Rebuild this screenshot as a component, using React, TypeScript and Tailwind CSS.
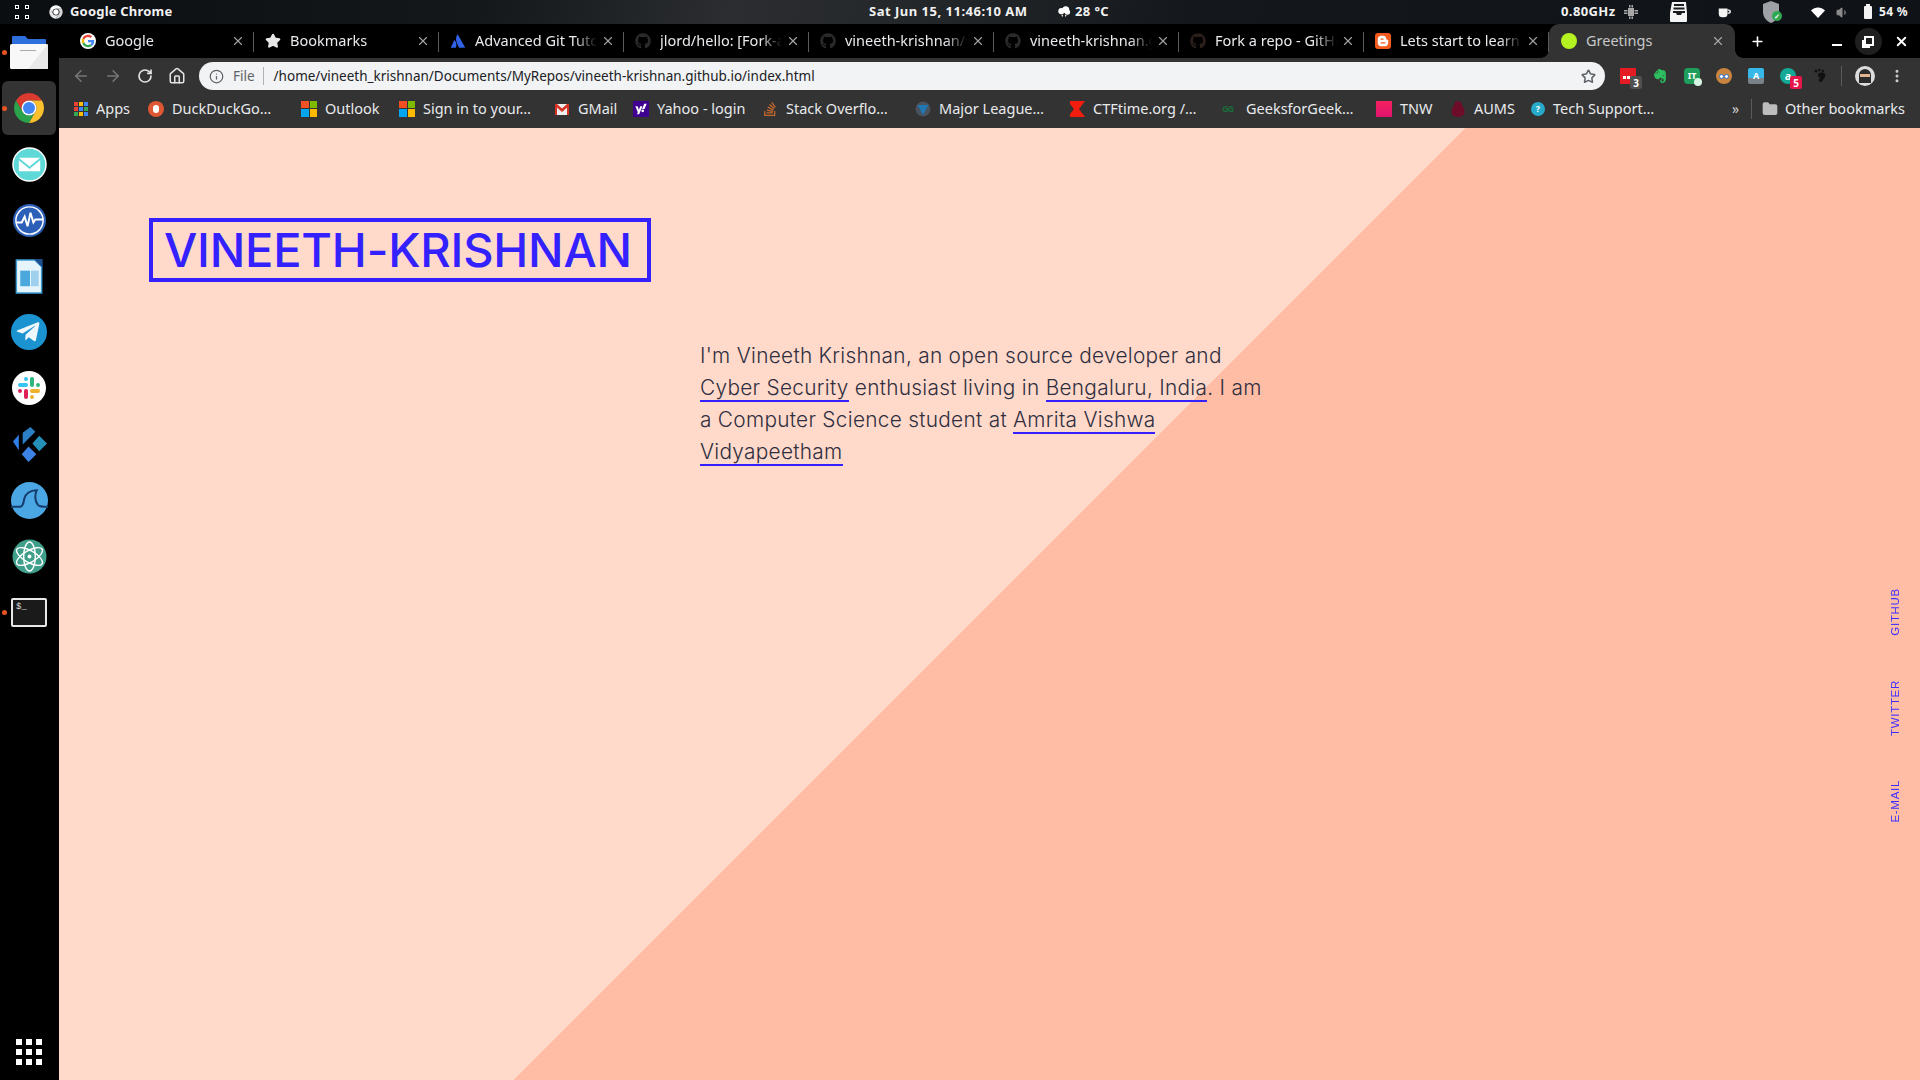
import type { ReactNode } from 'react';
import { ArrowLeft, ArrowRight, RotateCw, Home, Info, Star, X, Plus, Folder, Volume1, MoreVertical } from 'lucide-react';
import { FaGithub, FaTelegramPlane, FaEvernote, FaStackOverflow, FaYahoo, FaBloggerB } from 'react-icons/fa';

const ui = '[font-family:"Noto_Sans",sans-serif]';

const ChromeLogo = ({ className, mono }: { className?: string; mono?: boolean }) => (
  <svg viewBox="0 0 48 48" className={className}>
    <path fill={mono ? '#fff' : '#db3a2e'} d="M6.68 14A20 20 0 0 1 41.32 14H24A10 10 0 0 0 15.34 29Z" />
    <path fill={mono ? '#e8e8e8' : '#2ba24c'} d="M6.68 14 15.34 29A10 10 0 0 0 32.66 29L24 44A20 20 0 0 1 6.68 14Z" />
    <path fill={mono ? '#d5d5d5' : '#fbc02d'} d="M41.32 14H24A10 10 0 0 1 32.66 29L24 44A20 20 0 0 0 41.32 14Z" />
    <circle cx="24" cy="24" r="10" fill={mono ? '#14181c' : '#fff'} />
    <circle cx="24" cy="24" r="8" fill={mono ? '#fff' : '#4285f4'} />
  </svg>
);

const GoogleG = () => (
  <svg viewBox="0 0 48 48" className="w-4 h-4 rounded-full bg-white">
    <path fill="#ea4335" d="M24 12c3 0 5.4 1 7.4 2.800l5-5C33.200 6.800 29 5 24 5 16.600 5 10.200 9.200 7.200 15.400l5.800 4.500C14.500 15.300 18.900 12 24 12z" />
    <path fill="#4285f4" d="M42.600 24.500c0-1.400-.1-2.600-.4-3.800H24v7.200h10.500c-.5 2.500-1.900 4.600-4 6l5.600 4.400c3.400-3.100 6.500-7.700 6.500-13.800z" />
    <path fill="#fbbc05" d="M13 28.100c-.4-1.300-.7-2.700-.7-4.100s.3-2.800.7-4.100l-5.800-4.500C6 18 5 20.900 5 24s1 6 2.200 8.600z" />
    <path fill="#34a853" d="M24 43c5 0 9.200-1.700 12.100-4.500l-5.600-4.400c-1.600 1.100-3.700 1.900-6.500 1.900-5.100 0-9.500-3.300-11-7.900l-5.800 4.500C10.200 38.800 16.600 43 24 43z" />
  </svg>
);

const AtlassianIcon = () => (
  <svg viewBox="0 0 24 24" className="w-4 h-4">
    <path fill="#2f62e8" d="M7.200 11.300c-.3-.4-.8-.3-1 .1L1 22h7.300c.3 0 .5-.2.600-.4 1.600-3.300.6-8.300-1.700-10.300z" />
    <path fill="#2f62e8" d="M11 2.400c-2.700 4.300-2.500 9 .1 14.300l2.300 4.900c.1.200.3.400.6.400H22c.4 0 .6-.4.500-.7L11.800 2.400c-.2-.4-.6-.4-.8 0z" />
  </svg>
);

const Windows = () => (
  <span className="grid grid-cols-2 gap-px w-4 h-4 shrink-0">
    <span className="bg-[#f25022]" />
    <span className="bg-[#7fba00]" />
    <span className="bg-[#00a4ef]" />
    <span className="bg-[#ffb900]" />
  </span>
);

const AppsGrid = () => (
  <span className="grid grid-cols-3 gap-px w-[14px] h-[14px] shrink-0">
    {['bg-[#ea4335]', 'bg-[#fbbc05]', 'bg-[#4285f4]', 'bg-[#ea4335]', 'bg-[#4285f4]', 'bg-[#34a853]', 'bg-[#34a853]', 'bg-[#fbbc05]', 'bg-[#4285f4]'].map((c, i) => (
      <span key={i} className={c} />
    ))}
  </span>
);

const tabs: { title: string; icon: ReactNode }[] = [
  { title: 'Google', icon: <GoogleG /> },
  { title: 'Bookmarks', icon: <Star className="w-4 h-4 text-[#e8e8e8]" fill="#e8e8e8" /> },
  { title: 'Advanced Git Tutorials', icon: <AtlassianIcon /> },
  { title: 'jlord/hello: [Fork-a-Repo]', icon: <FaGithub className="w-4 h-4 text-[#2a2a2a]" /> },
  { title: 'vineeth-krishnan/vineeth', icon: <FaGithub className="w-4 h-4 text-[#2a2a2a]" /> },
  { title: 'vineeth-krishnan.github.io', icon: <FaGithub className="w-4 h-4 text-[#2a2a2a]" /> },
  { title: 'Fork a repo - GitHub Help', icon: <FaGithub className="w-4 h-4 text-[#2b1f1c]" /> },
  {
    title: 'Lets start to learn Git',
    icon: (
      <span className="flex items-center justify-center w-4 h-4 rounded-[3px] bg-[#f4591e]">
        <FaBloggerB className="w-3 h-3 text-white" />
      </span>
    ),
  },
];

const bookmarks: { title: string; width: string; icon: ReactNode }[] = [
  { title: 'Apps', width: 'w-[74px]', icon: <AppsGrid /> },
  {
    title: 'DuckDuckGo…',
    width: 'w-[153px]',
    icon: (
      <span className="flex items-center justify-center w-4 h-4 rounded-full bg-[#de5833] shrink-0">
        <span className="w-[6px] h-[8px] rounded-full bg-white" />
      </span>
    ),
  },
  { title: 'Outlook', width: 'w-[98px]', icon: <Windows /> },
  { title: 'Sign in to your…', width: 'w-[155px]', icon: <Windows /> },
  {
    title: 'GMail',
    width: 'w-[79px]',
    icon: (
      <svg viewBox="0 0 16 16" className="w-4 h-4 shrink-0">
        <rect x="1" y="3" width="14" height="11" fill="#eee" />
        <path fill="#d93025" d="M1 3h2l5 4.500L13 3h2v11h-2V6.500L8 11 3 6.500V14H1z" />
      </svg>
    ),
  },
  {
    title: 'Yahoo - login',
    width: 'w-[129px]',
    icon: (
      <span className="flex items-center justify-center w-4 h-4 bg-[#400090] shrink-0">
        <FaYahoo className="w-3 h-3 text-white" />
      </span>
    ),
  },
  { title: 'Stack Overflo…', width: 'w-[153px]', icon: <FaStackOverflow className="w-4 h-4 text-[#c8682c] shrink-0" /> },
  {
    title: 'Major League…',
    width: 'w-[154px]',
    icon: (
      <svg viewBox="0 0 16 16" className="w-4 h-4 shrink-0">
        <circle cx="8" cy="8" r="7.500" fill="#49525e" />
        <path fill="#1f78b4" d="M2.500 4h11L8 14z" />
      </svg>
    ),
  },
  {
    title: 'CTFtime.org /…',
    width: 'w-[153px]',
    icon: (
      <svg viewBox="0 0 16 16" className="w-4 h-4 shrink-0">
        <path fill="#f21d0f" d="M1 0h15L10 8l6 8H1l0-3 4-5-4-5z" />
      </svg>
    ),
  },
  {
    title: 'GeeksforGeek…',
    width: 'w-[154px]',
    icon: <span className="w-4 text-[9px] font-bold text-[#1b6b3a] shrink-0 tracking-[-1px]">GG</span>,
  },
  {
    title: 'TNW',
    width: 'w-[74px]',
    icon: <span className="w-4 h-4 bg-[linear-gradient(180deg,#f5215f,#e0146e)] shrink-0" />,
  },
  {
    title: 'AUMS',
    width: 'w-[81px]',
    icon: (
      <svg viewBox="0 0 16 16" className="w-4 h-4 shrink-0">
        <path fill="#6d0d2a" d="M8 0c2.500 0 4 2 4 4.500 1.500 1.500 2.500 4 2.500 7 0 2-2 4.500-6.500 4.500S1.500 13.500 1.500 11.500c0-3 1-5.500 2.500-7C4 2 5.500 0 8 0z" />
      </svg>
    ),
  },
  {
    title: 'Tech Support…',
    width: 'w-[201px]',
    icon: (
      <span className="flex items-center justify-center w-[14px] h-[14px] rounded-full bg-[#27a9c9] text-[9px] font-bold text-white shrink-0">?</span>
    ),
  },
];

const Tab = ({ title, icon }: { title: string; icon: ReactNode }) => (
  <div className="relative flex items-center h-[34px] w-[185px] shrink-0 pl-[11px]">
    <span className="flex items-center justify-center w-4 h-4 shrink-0">{icon}</span>
    <span className="ml-[9px] w-[122px] overflow-hidden whitespace-nowrap text-[14.500px] text-[#e8eaed] [mask-image:linear-gradient(90deg,#000_82%,transparent)]">
      {title}
    </span>
    <X className="absolute left-[162px] top-[10px] w-[14px] h-[14px] text-[#a0a0a0]" />
    <span className="absolute right-0 top-[8px] h-[20px] w-px bg-[#5b5b5b]" />
  </div>
);

const ExtBadge = ({ className, text }: { className: string; text: string }) => (
  <span className={`absolute -right-[6px] -bottom-[5px] flex items-center justify-center w-[12px] h-[13px] rounded-[2px] text-[10px] font-bold leading-none text-white ${className}`}>
    {text}
  </span>
);

const TopBar = () => (
  <header className={`flex items-center h-6 shrink-0 text-[13px] font-bold text-[#f2f2f2] bg-[linear-gradient(100deg,#0b0e11_0%,#14181b_25%,#2b2d30_38%,#24272a_48%,#14181c_62%,#0f1317_100%)] ${ui}`}>
    <span className="grid grid-cols-2 gap-x-[6px] gap-y-[6px] ml-[15px] w-[14px]">
      <span className="w-1 h-1 border border-white" />
      <span className="w-1 h-1 border border-white" />
      <span className="w-1 h-1 border border-white" />
      <span className="w-1 h-1 border border-white" />
    </span>
    <ChromeLogo mono className="w-4 h-4 ml-[19px]" />
    <span className="ml-[6px] w-[799px] whitespace-nowrap tracking-[0.2px]">Google Chrome</span>
    <span className="w-[188px] whitespace-nowrap tracking-[0.5px]">Sat Jun 15, 11:46:10 AM</span>
    <svg viewBox="0 0 16 16" className="w-[14px] h-[14px] fill-white">
      <circle cx="5" cy="7" r="3.500" />
      <circle cx="10" cy="5.500" r="4" />
      <circle cx="12" cy="8" r="3" />
      <path d="M5 11h2l-1 3zM9 11h2l-1 3z" />
    </svg>
    <span className="ml-[4px] w-[486px] whitespace-nowrap tracking-[0.4px]">28 °C</span>
    <span className="w-[63px] whitespace-nowrap tracking-[0.4px]">0.80GHz</span>
    <svg viewBox="0 0 14 14" className="w-[14px] h-[14px] fill-[#a8a8a8]">
      <path d="M4 3h6v8H4zM5 0h1.500v2.500H5zM7.500 0H9v2.500H7.500zM5 11.500h1.500V14H5zM7.500 11.500H9V14H7.500zM0 5h3.500v1.500H0zM0 7.500h3.500V9H0zM10.500 5H14v1.500h-3.500zM10.500 7.500H14V9h-3.500z" />
    </svg>
    <svg viewBox="0 0 22 22" className="w-[22px] h-[22px] ml-[30px]">
      <path fill="#f4f4f4" d="M4 1h14l1 11v8a1 1 0 0 1-1 1H3a1 1 0 0 1-1-1v-8z" />
      <path fill="#1a1d20" d="M6 3h10v2H6zM5.500 6.500h11v2h-11zM5 10h12v2h-3l-1 2H9l-1-2H5z" />
    </svg>
    <svg viewBox="0 0 16 16" className="w-[14px] h-[14px] ml-[27px] fill-[#f4f4f4]">
      <path d="M2 4h10v6a4 4 0 0 1-4 4H6a4 4 0 0 1-4-4z" />
      <path d="M12 5h1.500a2 2 0 0 1 0 5H12V8.500h1.200a.7.7 0 0 0 0-2H12z" />
    </svg>
    <span className="relative ml-[31px] w-[18px] h-[22px]">
      <svg viewBox="0 0 18 22" className="w-[18px] h-[22px]">
        <path fill="#9ea2a6" d="M9 0l8 3v8c0 5-3.500 9-8 11-4.500-2-8-6-8-11V3z" />
      </svg>
      <span className="absolute right-[-2px] bottom-[2px] flex items-center justify-center w-[10px] h-[10px] rounded-full bg-[#2fa84f] text-[7px] leading-none text-white">✓</span>
    </span>
    <svg viewBox="0 0 14 11" className="w-[14px] h-[11px] ml-[31px] fill-white">
      <path d="M0 3.500C2 1.500 4.500.5 7 .5s5 1 7 3L7 11z" />
    </svg>
    <Volume1 className="w-[13px] h-[13px] ml-[11px] text-[#8c8c8c]" fill="#8c8c8c" />
    <span className="relative ml-[15px] w-[8px] h-[13px] bg-[#f2f2f2] rounded-[1px]">
      <span className="absolute left-[2px] -top-[2px] w-[4px] h-[2px] bg-[#f2f2f2]" />
    </span>
    <span className="ml-[7px] whitespace-nowrap text-[12px] tracking-[0.3px]">54 %</span>
  </header>
);

const TabStrip = () => (
  <div className="flex items-center h-[34px] shrink-0 bg-black pl-[10px]">
    {tabs.map((t) => (
      <Tab key={t.title} title={t.title} icon={t.icon} />
    ))}
    <div className="relative flex items-center h-[34px] w-[186px] shrink-0 pl-[12px] rounded-t-[10px] bg-[#333333]">
      <span className="absolute -left-2 bottom-0 w-2 h-2 bg-[radial-gradient(circle_at_0_0,transparent_7.500px,#333333_8px)]" />
      <span className="absolute -right-2 bottom-0 w-2 h-2 bg-[radial-gradient(circle_at_100%_0,transparent_7.500px,#333333_8px)]" />
      <span className="w-4 h-4 rounded-full bg-[#b5f221] shrink-0" />
      <span className="ml-[9px] text-[14.500px] text-[#c6c8ca]">Greetings</span>
      <X className="absolute left-[162px] top-[10px] w-[14px] h-[14px] text-[#a8a8a8]" />
    </div>
    <Plus className="w-[15px] h-[15px] ml-[15px] text-white" strokeWidth={2.5} />
    <span className="ml-[67px] w-[10px] h-[2px] mt-[8px] bg-white" />
    <span className="flex items-center justify-center w-[27px] h-[27px] ml-[13px] rounded-full bg-[#1f1f1f]">
      <span className="relative w-[10px] h-[10px] border-2 border-white">
        <span className="absolute -left-[4px] top-[2px] w-[8px] h-[8px] border-l-2 border-b-2 border-white" />
      </span>
    </span>
    <X className="w-[15px] h-[15px] ml-[12px] text-white" strokeWidth={3} />
  </div>
);

const Toolbar = () => (
  <div className="flex items-center h-[34px] shrink-0 bg-[#333333] pt-[2px]">
    <ArrowLeft className="w-[18px] h-[18px] ml-[13px] text-[#777]" />
    <ArrowRight className="w-[18px] h-[18px] ml-[14px] text-[#777]" />
    <RotateCw className="w-[16px] h-[16px] ml-[15px] text-[#e3e3e3]" strokeWidth={2.5} />
    <Home className="w-[18px] h-[18px] ml-[15px] text-[#e3e3e3]" />
    <div className="flex items-center w-[1406px] h-[28px] ml-[13px] rounded-full bg-[#f1f3f4]">
      <Info className="w-[15px] h-[15px] ml-[10px] text-[#5f6368]" />
      <span className="ml-[9px] text-[13.500px] text-[#5f6368]">File</span>
      <span className="ml-[8px] w-px h-[18px] bg-[#b0b3b6]" />
      <span className="ml-[10px] text-[13.500px] text-[#202124] whitespace-nowrap">/home/vineeth_krishnan/Documents/MyRepos/vineeth-krishnan.github.io/index.html</span>
      <Star className="w-[15px] h-[15px] ml-auto mr-[9px] text-[#5f6368]" strokeWidth={2.5} />
    </div>
    <span className="relative flex items-end justify-center w-4 h-4 ml-[15px] bg-[#e51c23] rounded-[1px] pb-[5px] gap-px">
      <span className="w-[3px] h-[3px] bg-white" />
      <span className="w-[3px] h-[3px] bg-white" />
      <span className="w-[3px] h-[3px] bg-white" />
      <ExtBadge className="bg-[#505050]" text="3" />
    </span>
    <FaEvernote className="w-4 h-4 ml-[16px] text-[#2dbe60]" />
    <span className="relative flex items-center justify-center w-4 h-4 ml-[16px] rounded-[4px] bg-[#1e9e5a] text-[9px] font-bold text-white">
      IT
      <span className="absolute -right-[2px] -bottom-[2px] w-[8px] h-[8px] rounded-full bg-[#d7f5e3]" />
    </span>
    <span className="relative flex items-center justify-center w-4 h-4 ml-[16px] rounded-full bg-[#c9853e]">
      <span className="w-[5px] h-[5px] rounded-full border border-[#2d6fd0] bg-white" />
      <span className="w-[5px] h-[5px] rounded-full border border-[#2d6fd0] bg-white" />
    </span>
    <span className="flex items-center justify-center w-4 h-4 ml-[16px] rounded-[2px] bg-[linear-gradient(180deg,#36b9e8_60%,#7a8288_60%)] text-[9px] font-bold text-white">A</span>
    <span className="relative flex items-center justify-center w-4 h-4 ml-[16px] rounded-full bg-[#14a896] text-[11px] font-bold text-white">
      a
      <ExtBadge className="bg-[#e8174b]" text="5" />
    </span>
    <svg viewBox="0 0 16 16" className="w-4 h-4 ml-[16px] fill-[#111]">
      <path d="M6 6c2-2 6-2 7 0 1 3-1 4-2 6-1 2-3 3-4 1s1-2 1-3-3-1-2-4z" />
      <circle cx="4" cy="3" r="1.500" />
      <circle cx="7.500" cy="2" r="1.300" />
      <circle cx="11" cy="3" r="1.200" />
    </svg>
    <span className="w-px h-[20px] ml-[13px] bg-[#5b5b5b]" />
    <span className="relative flex justify-center w-[20px] h-[20px] ml-[13px] rounded-full bg-[#dcdcdc] overflow-hidden">
      <span className="absolute top-[3px] w-[12px] h-[14px] rounded-t-[6px] bg-[#2b2b2b]" />
      <span className="absolute top-[8px] w-[10px] h-[3px] bg-[#e2b38f]" />
    </span>
    <MoreVertical className="w-4 h-4 ml-[14px] text-[#d0d0d0]" strokeWidth={2.5} />
  </div>
);

const BookmarksBar = () => (
  <div className="flex items-center h-[36px] shrink-0 bg-[#333333] pl-[15px] pb-[3px] text-[14.500px] text-[#e8eaed]">
    {bookmarks.map((b) => (
      <div key={b.title} className={`flex items-center gap-[8px] shrink-0 whitespace-nowrap ${b.width}`}>
        {b.icon}
        <span>{b.title}</span>
      </div>
    ))}
    <span className="w-[10px] text-[14px] text-[#d0d0d0]">»</span>
    <span className="w-px h-[20px] ml-[9px] bg-[#5b5b5b]" />
    <Folder className="w-4 h-4 ml-[10px] text-[#bdbdbd]" fill="#bdbdbd" />
    <span className="ml-[7px] whitespace-nowrap">Other bookmarks</span>
  </div>
);

const DockSlot = ({ children, active, running }: { children: ReactNode; active?: boolean; running?: boolean }) => (
  <div className="relative flex items-center justify-center w-full h-14 shrink-0 pr-px">
    {active && <span className="absolute left-[2px] top-[1px] w-[54px] h-[54px] rounded-[6px] bg-[#333333]" />}
    {running && <span className="absolute left-[2px] top-[26px] w-[5px] h-[5px] rounded-full bg-[#e95420]" />}
    <span className="relative flex items-center justify-center">{children}</span>
  </div>
);

const Dock = () => (
  <aside className="flex flex-col w-[59px] shrink-0 bg-black">
    <DockSlot running>
      <svg viewBox="0 0 38 33" className="w-[38px] h-[33px]">
        <path fill="#2f6fdc" d="M3 0h12l3 3h17a1 1 0 0 1 1 1v8H2V1a1 1 0 0 1 1-1z" />
        <rect y="8" width="38" height="25" rx="1.500" fill="#f8f8f8" />
        <path fill="#e9e9e9" d="M38 8v25H18z" />
        <rect x="10" y="14" width="16" height="1" fill="#aaa" />
      </svg>
    </DockSlot>
    <DockSlot active running>
      <ChromeLogo className="w-[36px] h-[36px]" />
    </DockSlot>
    <DockSlot>
      <svg viewBox="0 0 36 36" className="w-[35px] h-[35px]">
        <circle cx="18" cy="18" r="17" fill="#5fd8d8" stroke="#fff" strokeWidth="1.500" />
        <path fill="#fff" d="M7 11h22L18 20zM7 13.500V25h22V13.500L18 22.500z" />
      </svg>
    </DockSlot>
    <DockSlot>
      <svg viewBox="0 0 36 36" className="w-[35px] h-[35px]">
        <circle cx="18" cy="18" r="17" fill="#2c5fb8" />
        <circle cx="18" cy="18" r="14" fill="none" stroke="#fff" strokeWidth="1.500" />
        <path fill="none" stroke="#fff" strokeWidth="2" d="M4 20h6l3-6 3 10 3-14 3 10 2-3h8" />
      </svg>
    </DockSlot>
    <DockSlot>
      <svg viewBox="0 0 28 36" className="w-[28px] h-[35px]">
        <path fill="#e6f4fb" stroke="#3c9dd6" strokeWidth="1.500" d="M1 1h19l7 7v27H1z" />
        <path fill="#1f4e8c" d="M19 0h9v9z" />
        <path fill="#4aa8dd" d="M5 12h10v16H5z" />
        <path fill="#9fd0ee" d="M16 12h8v16h-8z" />
      </svg>
    </DockSlot>
    <DockSlot>
      <span className="flex items-center justify-center w-[36px] h-[36px] rounded-full bg-[#1c93d1]">
        <FaTelegramPlane className="w-[26px] h-[26px] text-[#eef7fb] -ml-[3px]" />
      </span>
    </DockSlot>
    <DockSlot>
      <span className="flex items-center justify-center w-[34px] h-[34px] rounded-full bg-white">
        <svg viewBox="0 0 24 24" className="w-[24px] h-[24px]">
          <rect x="1" y="7" width="10" height="4" rx="2" fill="#36c5f0" />
          <rect x="7" y="1" width="4" height="4" rx="2" fill="#36c5f0" />
          <rect x="13" y="1" width="4" height="10" rx="2" fill="#2eb67d" />
          <rect x="19" y="7" width="4" height="4" rx="2" fill="#2eb67d" />
          <rect x="13" y="13" width="10" height="4" rx="2" fill="#ecb22e" />
          <rect x="13" y="19" width="4" height="4" rx="2" fill="#ecb22e" />
          <rect x="7" y="13" width="4" height="10" rx="2" fill="#e01e5a" />
          <rect x="1" y="13" width="4" height="4" rx="2" fill="#e01e5a" />
        </svg>
      </span>
    </DockSlot>
    <DockSlot>
      <svg viewBox="0 0 36 36" className="w-[35px] h-[35px]">
        <path fill="#2f7ee8" d="M1 15 7 8v16z" />
        <path fill="#2b7fc4" d="M11 6l8-6 5 5-13 13z" />
        <path fill="#2490b8" d="M28 9l8 8-8 8-7-8z" />
        <path fill="#3d83e6" d="M17 20l8 8-8 8-7-8z" />
      </svg>
    </DockSlot>
    <DockSlot>
      <svg viewBox="0 0 36 36" className="w-[37px] h-[37px]">
        <circle cx="18" cy="18" r="18" fill="#4aa7e4" />
        <path fill="none" stroke="#173d6e" strokeWidth="2" d="M0 24h9c3 0 3-4 4-8 1-4 5-8 12-8-2 4-2 10 1 14 1 2 4 2 10 2" />
      </svg>
    </DockSlot>
    <DockSlot>
      <svg viewBox="0 0 36 36" className="w-[35px] h-[35px]">
        <circle cx="18" cy="18" r="17.500" fill="#3f9f8b" />
        <g fill="none" stroke="#fff" strokeWidth="1.500">
          <ellipse cx="18" cy="18" rx="15" ry="6" transform="rotate(30 18 18)" />
          <ellipse cx="18" cy="18" rx="15" ry="6" transform="rotate(90 18 18)" />
          <ellipse cx="18" cy="18" rx="15" ry="6" transform="rotate(150 18 18)" />
        </g>
        <circle cx="18" cy="18" r="2" fill="#fff" />
      </svg>
    </DockSlot>
    <DockSlot running>
      <span className="block w-[36px] h-[29px] rounded-[2px] border-2 border-[#e8e8e8] bg-[#1a1a1a] pl-[3px] text-[9px] leading-[14px] text-[#ddd] [font-family:'Liberation_Mono',monospace]">$_</span>
    </DockSlot>
    <div className="grid grid-cols-3 gap-x-1 gap-y-1 w-[26px] mt-auto mb-[15px] ml-[16px]">
      {Array.from({ length: 9 }).map((_, i) => (
        <span key={i} className="w-[6px] h-[6px] bg-white" />
      ))}
    </div>
  </aside>
);

const Link = ({ children }: { children: ReactNode }) => (
  <span className="border-b-2 border-[#3321ff]">{children}</span>
);

const Page = () => (
  <main className="relative flex-1 bg-[linear-gradient(135deg,#ffd9ca_50%,#ffbda6_50%)] [font-family:Inter,sans-serif]">
    <h1 className="w-[502px] h-16 ml-[90px] mt-[90px] border-4 border-[#3321ff] pl-[11px] text-[47px] leading-[56px] font-medium tracking-[-0.2px] whitespace-nowrap text-[#3321ff]">
      VINEETH-KRISHNAN
    </h1>
    <p className="ml-[641px] mt-[58px] text-[20.800px] leading-[32px] font-light tracking-[0.3px] whitespace-nowrap text-[#2f2f3f]">
      I'm Vineeth Krishnan, an open source developer and
      <br />
      <Link>Cyber Security</Link> enthusiast living in <Link>Bengaluru, India</Link>. I am
      <br />
      a Computer Science student at <Link>Amrita Vishwa</Link>
      <br />
      <Link>Vidyapeetham</Link>
    </p>
    <nav className="absolute right-[18px] top-[460px] flex flex-col items-center gap-[44px] text-[11.500px] leading-[14px] uppercase text-[#3f2fff] [font-family:'Liberation_Sans',sans-serif] tracking-[0.7px]">
      <span className="[writing-mode:vertical-rl] rotate-180">GitHub</span>
      <span className="[writing-mode:vertical-rl] rotate-180">Twitter</span>
      <span className="[writing-mode:vertical-rl] rotate-180">E-mail</span>
    </nav>
  </main>
);

export default function App() {
  return (
    <div className={`flex flex-col w-[1920px] h-[1080px] overflow-hidden bg-black ${ui}`}>
      <TopBar />
      <div className="flex flex-1 min-h-0">
        <Dock />
        <div className="flex flex-col flex-1 min-w-0">
          <TabStrip />
          <Toolbar />
          <BookmarksBar />
          <Page />
        </div>
      </div>
    </div>
  );
}
